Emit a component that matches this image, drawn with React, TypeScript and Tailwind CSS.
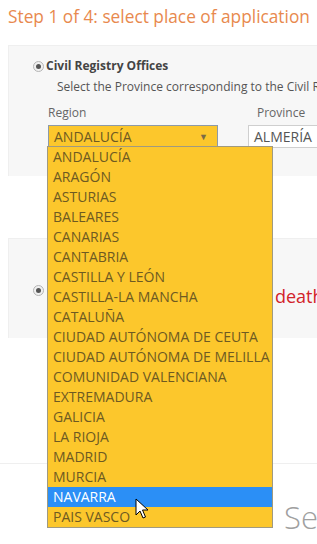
import React from "react";

const regions = [
  "ANDALUCÍA",
  "ARAGÓN",
  "ASTURIAS",
  "BALEARES",
  "CANARIAS",
  "CANTABRIA",
  "CASTILLA Y LEÓN",
  "CASTILLA-LA MANCHA",
  "CATALUÑA",
  "CIUDAD AUTÓNOMA DE CEUTA",
  "CIUDAD AUTÓNOMA DE MELILLA",
  "COMUNIDAD VALENCIANA",
  "EXTREMADURA",
  "GALICIA",
  "LA RIOJA",
  "MADRID",
  "MURCIA",
  "NAVARRA",
  "PAIS VASCO",
];

function Radio() {
  return (
    <span className="flex h-[11px] w-[11px] shrink-0 items-center justify-center rounded-full border border-[#b5b5b5] bg-[#f0f0f0]">
      <span className="h-[5px] w-[5px] rounded-full bg-[#555]" />
    </span>
  );
}

export default function App() {
  return (
    <div
      className="relative h-[544px] w-[317px] overflow-hidden bg-white"
      style={{ fontFamily: '"Open Sans", "Noto Sans", sans-serif' }}
    >
      <div className="pl-2 pt-[5px] text-[17.3px] leading-[24px] whitespace-nowrap text-[#e8894e]">
        Step 1 of 4: select place of application
      </div>

      <div className="ml-2 mt-[16px] h-[131px] border-t border-l border-[#efefef] bg-[#f7f7f7] pl-[24px] pt-[12px]">
        <div className="flex items-center gap-[2px]">
          <Radio />
          <span className="text-[12px] leading-[16px] font-bold text-[#444]">Civil Registry Offices</span>
        </div>
        <div className="mt-[5px] pl-[24px] text-[12px] leading-[16px] whitespace-nowrap text-[#555]">
          Select the Province corresponding to the Civil Registry Office
        </div>
        <div className="mt-[10px] flex gap-[30px] pl-[15px]">
          <div className="flex flex-col">
            <span className="text-[12px] leading-[16px] text-[#666]">Region</span>
            <div className="mt-[4px] flex h-[23px] w-[170px] items-center justify-between border border-[#8d9aa8] bg-[#fcc72c] pl-[5px] pr-[9px]">
              <span className="text-[14px] leading-[18px] text-[#6e5a22]">ANDALUCÍA</span>
              <span className="text-[9px] text-[#7a6a45]">▼</span>
            </div>
          </div>
          <div className="flex flex-col">
            <span className="pl-[9px] text-[12px] leading-[16px] text-[#666]">Province</span>
            <div className="mt-[4px] flex h-[23px] w-[120px] items-center border border-[#cfcfcf] bg-white pl-[5px]">
              <span className="text-[14px] leading-[18px] text-[#555]">ALMERÍA</span>
            </div>
          </div>
        </div>
      </div>

      <div className="ml-2 mt-[62px] flex h-[100px] items-center border-t border-l border-[#efefef] bg-[#f7f7f7] pl-[24px] pt-[3px]">
        <Radio />
        <span className="ml-[231px] translate-y-[6px] text-[18px] whitespace-nowrap text-[#d2232a]">death</span>
      </div>

      <div className="mt-[125px] border-t border-[#efefef]" />
      <div className="mt-[35px] pl-[284px] text-[31px] leading-[36px] font-light whitespace-nowrap text-[#a0a0a0]">
        Se
      </div>

      <div className="absolute left-[47px] top-[146px] w-[226px] border border-[#a09a80] bg-[#fcc72c]">
        {regions.map((r) => (
          <div
            key={r}
            className={
              r === "NAVARRA"
                ? "h-[20px] bg-[#2b8ff6] pl-[5px] text-[14px] leading-[20px] whitespace-nowrap text-white"
                : "h-[20px] pl-[5px] text-[14px] leading-[20px] whitespace-nowrap text-[#6e5a22]"
            }
          >
            {r}
          </div>
        ))}
      </div>

      <svg className="absolute left-[135px] top-[498px]" width="14" height="22" viewBox="0 0 14 22">
        <path d="M1 1 L1 17 L5 13 L8 20 L10.5 19 L7.5 12 L13 12 Z" fill="#fff" stroke="#000" strokeWidth="1" strokeLinejoin="round" />
      </svg>
    </div>
  );
}
